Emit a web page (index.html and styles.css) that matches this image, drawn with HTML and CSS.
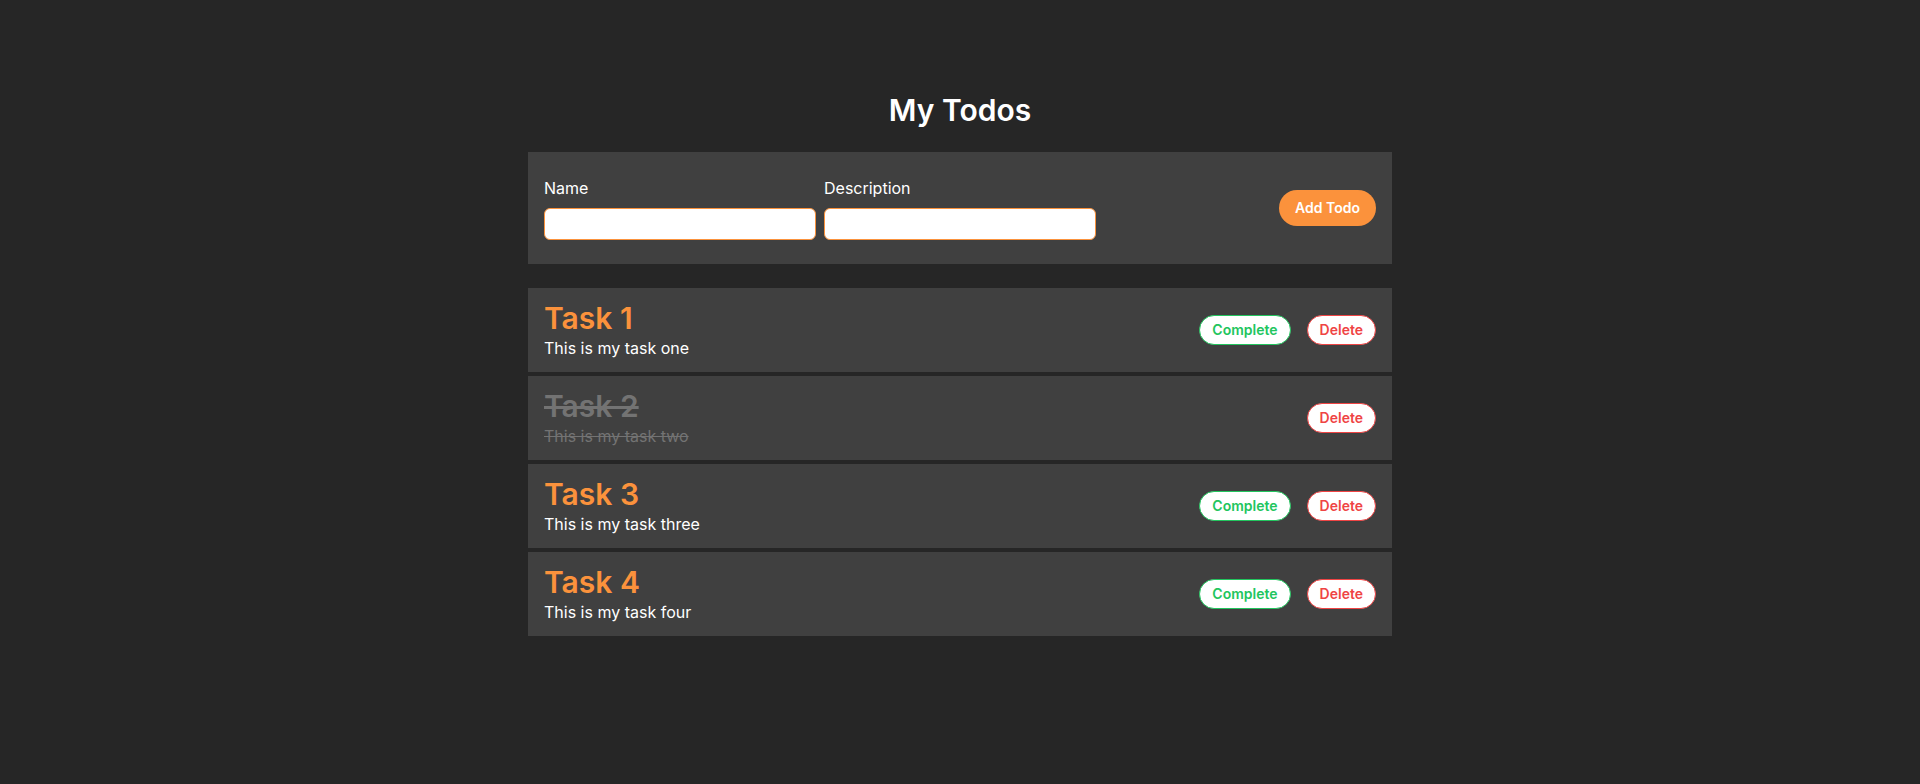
FILE: index.html
```html
<!DOCTYPE html>
<html lang="en">
<head>
<meta charset="utf-8">
<title>My Todos</title>
<link rel="stylesheet" href="styles.css">
</head>
<body>
<main class="app">
  <h1 class="app-title">My Todos</h1>
  <form class="todo-form">
    <div class="fields">
      <label class="field">
        <span class="field-label">Name</span>
        <input class="field-input" type="text">
      </label>
      <label class="field">
        <span class="field-label">Description</span>
        <input class="field-input" type="text">
      </label>
    </div>
    <button type="button" class="btn-add">Add Todo</button>
  </form>
  <ul class="todo-list">
    <li class="todo">
      <div class="todo-text">
        <div class="todo-name">Task 1</div>
        <div class="todo-desc">This is my task one</div>
      </div>
      <div class="todo-actions">
        <button type="button" class="pill pill-complete">Complete</button>
        <button type="button" class="pill pill-delete">Delete</button>
      </div>
    </li>
    <li class="todo done">
      <div class="todo-text">
        <div class="todo-name">Task 2</div>
        <div class="todo-desc">This is my task two</div>
      </div>
      <div class="todo-actions">
        <button type="button" class="pill pill-delete">Delete</button>
      </div>
    </li>
    <li class="todo">
      <div class="todo-text">
        <div class="todo-name">Task 3</div>
        <div class="todo-desc">This is my task three</div>
      </div>
      <div class="todo-actions">
        <button type="button" class="pill pill-complete">Complete</button>
        <button type="button" class="pill pill-delete">Delete</button>
      </div>
    </li>
    <li class="todo">
      <div class="todo-text">
        <div class="todo-name">Task 4</div>
        <div class="todo-desc">This is my task four</div>
      </div>
      <div class="todo-actions">
        <button type="button" class="pill pill-complete">Complete</button>
        <button type="button" class="pill pill-delete">Delete</button>
      </div>
    </li>
  </ul>
</main>
</body>
</html>
```
FILE: styles.css
```css
* { box-sizing: border-box; }
html, body {
  margin: 0;
  padding: 0;
  background: #262626;
  font-family: Inter, "Noto Sans", sans-serif;
  color: #ffffff;
}
.app {
  width: 864px;
  margin: 0 auto;
  padding-top: 92px;
}
.app-title {
  margin: 0 0 24px;
  font-size: 30px;
  line-height: 36px;
  font-weight: 600;
  text-align: center;
}
.todo-form {
  display: flex;
  align-items: center;
  justify-content: space-between;
  background: #404040;
  padding: 24px 16px;
  margin: 0 0 24px;
}
.fields {
  display: flex;
  gap: 8px;
}
.field {
  display: flex;
  flex-direction: column;
  gap: 8px;
}
.field-label {
  font-size: 16px;
  line-height: 24px;
}
.field-input {
  width: 272px;
  height: 32px;
  border: 1px solid #fb923c;
  border-radius: 6px;
  background: #ffffff;
  font: inherit;
  padding: 0 8px;
  margin: 0;
}
.btn-add {
  background: #fb923c;
  color: #ffffff;
  border: 0;
  border-radius: 9999px;
  padding: 8px 16px;
  font-family: inherit;
  font-size: 14px;
  line-height: 20px;
  font-weight: 600;
  margin: 0;
}
.todo-list {
  list-style: none;
  margin: 0;
  padding: 0;
  display: flex;
  flex-direction: column;
  gap: 4px;
}
.todo {
  display: flex;
  align-items: center;
  justify-content: space-between;
  background: #404040;
  padding: 12px 16px;
}
.todo-name {
  font-size: 30px;
  line-height: 36px;
  font-weight: 600;
  color: #fb923c;
}
.todo-desc {
  font-size: 16px;
  line-height: 24px;
  color: #ffffff;
}
.todo.done .todo-name,
.todo.done .todo-desc {
  color: #737373;
  text-decoration: line-through;
}
.todo-actions {
  display: flex;
  gap: 16px;
}
.pill {
  background: #ffffff;
  border: 1px solid;
  border-radius: 9999px;
  padding: 4px 12px;
  font-family: inherit;
  font-size: 14px;
  line-height: 20px;
  font-weight: 600;
  margin: 0;
}
.pill-complete {
  color: #22c55e;
  border-color: #22c55e;
}
.pill-delete {
  color: #ef4444;
  border-color: #ef4444;
}
```
